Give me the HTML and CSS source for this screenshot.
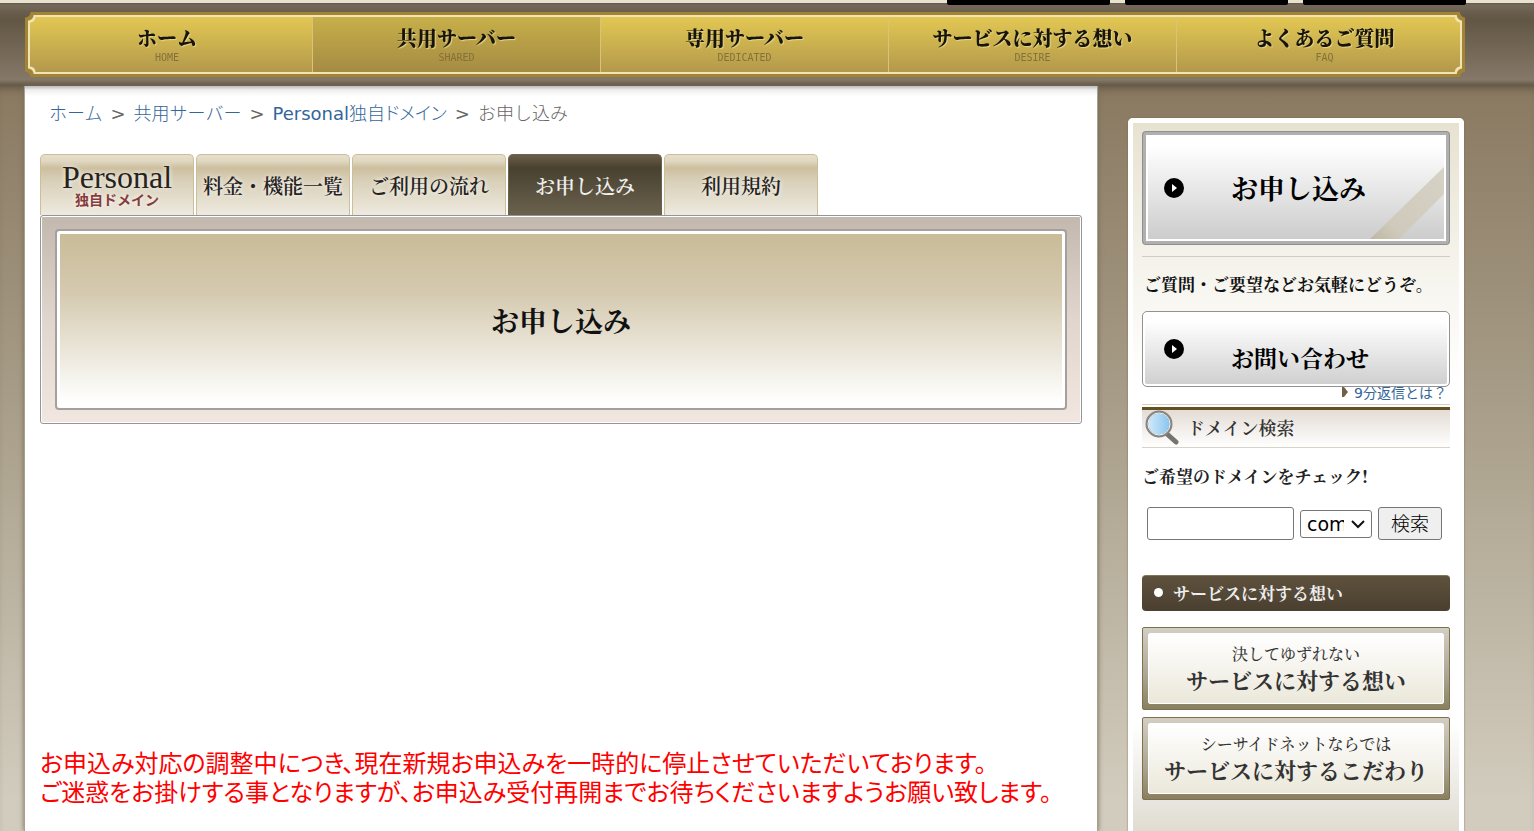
FILE: index.html
```html
<!DOCTYPE html>
<html lang="ja">
<head>
<meta charset="utf-8">
<title>お申し込み</title>
<link rel="stylesheet" href="styles.css">
</head>
<body>
<header class="header">
  <div class="topstrip"><div class="toptabs"><span></span><span></span><span></span></div></div>
  <div class="plate notch"><div class="plate-line notch">
    <nav class="nav notch">
      <a href="#"><b>ホーム</b><small>HOME</small></a>
      <a href="#" class="current"><b>共用サーバー</b><small>SHARED</small></a>
      <a href="#"><b>専用サーバー</b><small>DEDICATED</small></a>
      <a href="#"><b>サービスに対する想い</b><small>DESIRE</small></a>
      <a href="#"><b>よくあるご質問</b><small>FAQ</small></a>
    </nav>
  </div></div>
</header>
<div class="page">
  <main class="main">
    <div class="crumbs"><a href="#">ホーム</a><span>&gt;</span><a href="#">共用サーバー</a><span>&gt;</span><a href="#" class="plan"><b>Personal</b>独自ドメイン</a><span>&gt;</span><em>お申し込み</em></div>
    <div class="tabs">
      <a href="#" class="tab brand"><strong>Personal</strong><small>独自ドメイン</small></a>
      <a href="#" class="tab">料金・機能一覧</a>
      <a href="#" class="tab">ご利用の流れ</a>
      <a href="#" class="tab active">お申し込み</a>
      <a href="#" class="tab">利用規約</a>
    </div>
    <div class="hero"><h1>お申し込み</h1></div>
    <p class="notice">お申込み対応の調整中につき、現在新規お申込みを一時的に停止させていただいております。<br>ご迷惑をお掛けする事となりますが、お申込み受付再開までお待ちくださいますようお願い致します。</p>
  </main>
  <aside class="side">
    <a href="#" class="apply">
      <svg class="ribbon" width="76" height="76" viewBox="0 0 76 76"><defs><linearGradient id="rib" x1="0" y1="1" x2="1" y2="0"><stop offset="0" stop-color="#bdb7a3"/><stop offset=".25" stop-color="#cfcabb"/><stop offset="1" stop-color="#d6d2c6"/></linearGradient></defs><path d="M2 76 76 4V31L31 76Z" fill="url(#rib)"/></svg>
      <svg class="dot" width="20" height="20" viewBox="0 0 20 20"><circle cx="10" cy="10" r="10" fill="#000"/><path d="M8 6v8l5-4z" fill="#fff"/></svg>
      <span>お申し込み</span>
    </a>
    <p class="ask">ご質問・ご要望などお気軽にどうぞ。</p>
    <a href="#" class="contact">
      <svg class="dot" width="20" height="20" viewBox="0 0 20 20"><circle cx="10" cy="10" r="10" fill="#000"/><path d="M8 6v8l5-4z" fill="#fff"/></svg>
      <span>お問い合わせ</span>
    </a>
    <div class="reply"><svg width="6" height="10" viewBox="0 0 6 10"><path d="M0 0h2l4 5-4 5H0z" fill="#6f6046"/></svg><a href="#">9分返信とは？</a></div>
    <h2 class="search-title">
      <svg width="34" height="36" viewBox="0 0 34 36"><defs><linearGradient id="lens" x1="0" x2="1"><stop offset="0" stop-color="#d5ecfa"/><stop offset="1" stop-color="#84c3ee"/></linearGradient></defs><path d="M22 24l9 8" stroke="#777370" stroke-width="5" stroke-linecap="round"/><circle cx="14" cy="14" r="12" fill="url(#lens)" stroke="#888582" stroke-width="3"/><circle cx="14" cy="14" r="11" fill="none" stroke="#eaf3f7"/></svg>
      <span>ドメイン検索</span></h2>
    <label class="check" for="domain">ご希望のドメインをチェック!</label>
    <form class="search">
      <input id="domain" type="text">
      <div class="pick">
        <select aria-label="ドメイン種別"><option>com</option><option>net</option></select>
        <svg width="14" height="9" viewBox="0 0 14 9"><path d="M1 1l6 6 6-6" fill="none" stroke="#111" stroke-width="2"/></svg>
      </div>
      <button type="button">検索</button>
    </form>
    <h2 class="thoughts">サービスに対する想い</h2>
    <a href="#" class="card"><span class="card-in"><small>決してゆずれない</small><b>サービスに対する想い</b></span></a>
    <a href="#" class="card"><span class="card-in"><small>シーサイドネットならでは</small><b>サービスに対するこだわり</b></span></a>
  </aside>
</div>
</body>
</html>
```
FILE: styles.css
```css
* { box-sizing: border-box; }
html { background: #d3cdc0; }
body {
  margin: 0;
  height: 100vh;
  overflow: hidden;
  display: flex;
  flex-direction: column;
  background: linear-gradient(#8a7961 86px, #a99f8a 420px, #d2ccbe 800px);
  font-family: "DejaVu Sans", "Noto Sans CJK JP", sans-serif;
  color: #111;
}
a { text-decoration: none; color: #336699; }
h1, h2, p { margin: 0; }
.nav, .tab, .hero, .apply, .ask, .contact, .search-title, .check, .thoughts, .card {
  font-family: "Noto Serif CJK JP", "Noto Sans CJK JP", sans-serif;
}

.header {
  height: 86px;
  flex: none;
  padding: 0 69px 0 25px;
  background: linear-gradient(#716657 3px, #625645 20px, #857868 80px, #6b5f4c 84px, #655a49);
}
.topstrip {
  height: 12px;
  margin: 0 -69px 0 -25px;
  padding-right: 68px;
  background: linear-gradient(#e8e2cf 3px, #645a4b 3px, #746959 5px, transparent 12px);
}
.toptabs { display: flex; justify-content: flex-end; gap: 15px; }
.toptabs span { width: 163px; height: 5px; background: #000; border-radius: 0 0 2px 2px; }
.notch {
  --n: 5px;
  -webkit-mask:
    radial-gradient(circle at 0 0, transparent var(--n), #000 calc(var(--n) + 1px)) 0 0 / 51% 51% no-repeat,
    radial-gradient(circle at 100% 0, transparent var(--n), #000 calc(var(--n) + 1px)) 100% 0 / 51% 51% no-repeat,
    radial-gradient(circle at 0 100%, transparent var(--n), #000 calc(var(--n) + 1px)) 0 100% / 51% 51% no-repeat,
    radial-gradient(circle at 100% 100%, transparent var(--n), #000 calc(var(--n) + 1px)) 100% 100% / 51% 51% no-repeat;
}
.plate { background: #a28434; padding: 3px; height: 65px; }
.plate-line { background: #f0e3b4; padding: 2px; height: 59px; }
.nav {
  display: grid;
  grid-template-columns: 283fr 288fr 288fr 288fr 283fr;
  height: 55px;
  background: linear-gradient(#e2c753, #cdb34f 45%, #b3984c);
}
.nav a {
  display: flex;
  flex-direction: column;
  align-items: center;
  padding-top: 8px;
  color: #17140a;
  border-right: 1px solid #d9c27a;
}
.nav a:first-child { padding-right: 8px; }
.nav a:last-child { border-right: 0; padding-left: 12px; }
.nav .current { background: linear-gradient(#c7af49, #a58b43); }
.nav b { font-size: 20px; line-height: 26px; font-weight: 900; text-shadow: 1px 1px 1px #e6d58a; }
.nav small { font: 10px/13px "DejaVu Sans Mono", monospace; color: #83713a; }

.page { flex: 1; min-height: 0; display: flex; gap: 30px; padding: 0 70px 0 24px; box-shadow: inset 0 8px 8px -6px #5f5342; }
.main {
  flex: 1;
  min-width: 0;
  padding: 16px 15px 0;
  background: linear-gradient(#bbb, #eee 4px, #fff 10px);
  border: solid #a79f90;
  border-width: 0 1px;
  box-shadow: 0 0 5px #776b58;
}
.crumbs {
  height: 52px;
  padding-left: 9px;
  display: flex;
  font-size: 18px;
  line-height: 24px;
  font-weight: 300;
  color: #666;
  white-space: nowrap;
}
.crumbs span { margin: 0 8px; font-weight: 400; }
.crumbs b { font-weight: 400; }
.crumbs .plan { font-feature-settings: "palt"; }
.crumbs em { font-style: normal; }
.tabs { display: grid; grid-template-columns: repeat(5, 154px); gap: 2px; height: 61px; }
.tab {
  display: flex;
  flex-direction: column;
  align-items: center;
  justify-content: center;
  padding-top: 2px;
  font-size: 20px;
  font-weight: 600;
  line-height: 28px;
  white-space: nowrap;
  color: #26231d;
  text-shadow: 0 0 5px #fff;
  border: 1px solid #cdbe9a;
  border-bottom: 0;
  border-radius: 5px 5px 0 0;
  background: linear-gradient(#e6dfce, #e0d8c2 6px, #cdbf9e 13px, #d8cfb8 25px, #eeeadf);
}
.tab.active { background: linear-gradient(#6a5e48, #484130 13px, #6b624e); border-color: #6b624e; color: #eee; text-shadow: none; }
.brand strong { font: 32px/28px "Liberation Serif", serif; }
.brand small { font: bold 14px/16px "Noto Sans CJK JP", sans-serif; color: #873c3c; }
.brand { padding-top: 0; }
.hero {
  height: 209px;
  padding: 13px 14px;
  border: 1px solid #94959a;
  border-radius: 3px;
  box-shadow: inset 0 0 0 1px #fff;
  background: linear-gradient(#c3b8ad, #e0d6cd 50%, #f1e7e0);
}
.hero h1 {
  height: 181px;
  display: flex;
  align-items: center;
  justify-content: center;
  font-size: 28px;
  color: #111;
  border: 2px solid #a5a09e;
  border-radius: 4px;
  box-shadow: inset 0 0 0 3px #fff;
  background: linear-gradient(#c9bb97, #d5cab0 35%, #fff 97%);
}
.notice {
  margin-top: 323px;
  font: 24px/29px "Noto Sans CJK JP", sans-serif;
  font-feature-settings: "palt";
  color: #f00;
  white-space: nowrap;
}

.side {
  flex: none;
  width: 336px;
  margin-top: 32px;
  padding: 8px 9px 0;
  border: 5px solid #fff;
  border-bottom: 0;
  border-radius: 5px 5px 0 0;
  box-shadow: 0 0 2px #77694f;
  background: linear-gradient(#e7e2d0, #f3f1e8 120px, #fff 260px, #fff 600px, #dcd8cd 720px);
}
.apply {
  position: relative;
  display: flex;
  align-items: center;
  height: 114px;
  padding-left: 18px;
  color: #000;
  border: 4px solid #b0b0b0;
  outline: 1px solid #909090;
  outline-offset: -1px;
  border-radius: 4px;
  box-shadow: inset 0 0 0 2px #fff;
  background: linear-gradient(#fff 10%, #cbcbcb);
}
.apply span { margin-left: 47px; font-size: 27px; line-height: 40px; font-weight: 700; position: relative; }
.ribbon { position: absolute; right: 2px; bottom: 2px; }
.ask {
  margin-top: 11px;
  padding: 14px 0 0 2px;
  height: 55px;
  border-top: 1px solid #ccc;
  font-size: 17px;
  line-height: 25px;
  font-weight: 700;
  white-space: nowrap;
}
.contact {
  display: flex;
  height: 76px;
  padding: 27px 0 0 21px;
  color: #000;
  border: 1px solid #929292;
  border-radius: 5px;
  box-shadow: inset 0 0 0 2px #fff;
  background: linear-gradient(#fff 12%, #cecece);
}
.contact span { margin-left: 47px; font-size: 23px; line-height: 37px; font-weight: 700; }
.reply {
  height: 18px;
  padding-right: 3px;
  display: flex;
  justify-content: flex-end;
  gap: 6px;
  font-size: 14px;
  line-height: 12px;
  border-bottom: 1px solid #d5d0c8;
}
.search-title {
  margin-top: 2px;
  height: 41px;
  padding-left: 3px;
  display: flex;
  gap: 8px;
  font-size: 18px;
  line-height: 35px;
  font-weight: 600;
  color: #333;
  border-top: 3px solid #655023;
  border-bottom: 1px solid #d8d2c8;
  background: linear-gradient(#e4dcd5, #fff);
}
.check { display: block; margin-top: 15px; font-size: 17px; line-height: 25px; font-weight: 700; color: #222; white-space: nowrap; }
.search { display: flex; align-items: center; gap: 6px; margin-top: 19px; padding-left: 5px; }
.search input, .search select, .search button { font: 19px/24px "DejaVu Sans", "Noto Sans CJK JP", sans-serif; border: 1px solid #767676; border-radius: 3px; }
.search input { width: 147px; height: 33px; background: #fff; }
.pick { position: relative; height: 28px; }
.pick svg { position: absolute; right: 7px; top: 10px; pointer-events: none; }
.search select { appearance: none; width: 72px; height: 28px; padding: 0 27px 0 6px; background: #fff; color: #000; text-overflow: clip; }
.search button { width: 64px; height: 33px; padding: 0; background: #efefef; color: #000; font-weight: 300; }
.thoughts {
  display: flex;
  align-items: center;
  gap: 10px;
  height: 36px;
  margin: 35px 0 16px;
  padding: 0 0 2px 12px;
  font-size: 17px;
  color: #eee;
  border-top: 1px solid #81745c;
  border-radius: 4px;
  background: linear-gradient(#5e513d, #4a3f30);
}
.thoughts::before { content: ""; width: 9px; height: 9px; border-radius: 50%; background: #fff; }
.card {
  display: block;
  height: 83px;
  margin-bottom: 7px;
  padding: 5px;
  color: #333;
  border: 1px solid #7d704c;
  border-radius: 2px;
  background: linear-gradient(#d2cec2, #aaa591 60%, #88805f);
}
.card-in {
  display: flex;
  flex-direction: column;
  align-items: center;
  height: 71px;
  padding-top: 8px;
  border: 1px solid #fff;
  border-radius: 2px;
  background: linear-gradient(#fff, #ebe8da);
  white-space: nowrap;
}
.card small { font-size: 16px; line-height: 23px; font-weight: 500; }
.card b { font-size: 22px; line-height: 30px; }
```
